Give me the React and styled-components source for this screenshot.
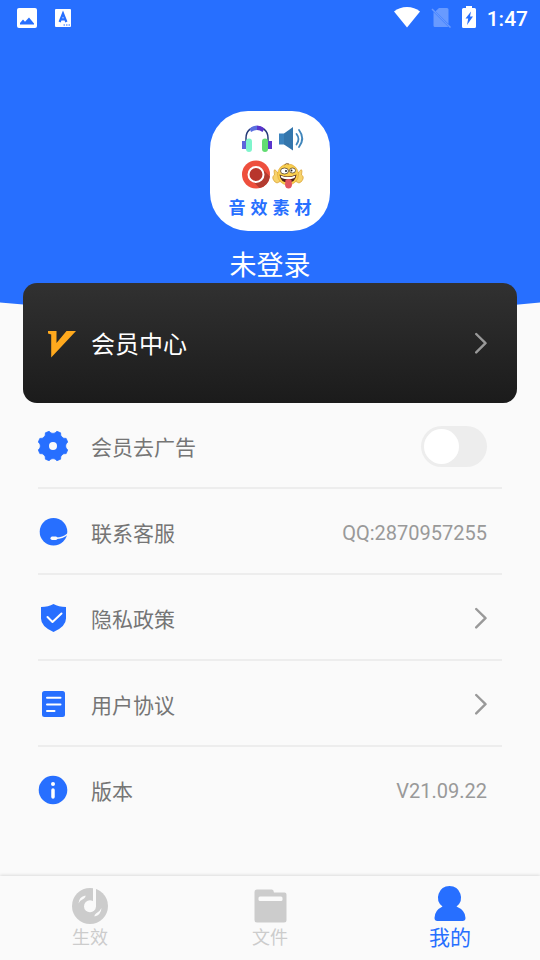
import { useState } from "react";
import styled, { createGlobalStyle } from "styled-components";

const GlobalStyle = createGlobalStyle`
  :root {
    --color-blue: #276fff;
    --color-page: #fafafa;
    --color-line: #ededed;
    --color-text: #757575;
    --color-muted: #999999;
    --color-tab: #cccccc;
    --font-latin: Roboto, "Noto Sans CJK SC", sans-serif;
  }

  * {
    box-sizing: border-box;
  }

  body {
    margin: 0;
    background-color: var(--color-page);
    font-family: "Noto Sans CJK SC", sans-serif;
  }

  button {
    border: none;
    background: none;
    padding: 0;
    font: inherit;
    cursor: pointer;
  }

  svg {
    display: block;
    flex-shrink: 0;
  }
`;

const Page = styled.div`
  min-height: 100vh;
  display: flex;
  flex-direction: column;
`;

const Header = styled.header`
  height: 315px;
  background-color: var(--color-blue);
  clip-path: ellipse(180% 100% at 50% 0);
  color: white;
`;

const StatusBar = styled.div`
  display: flex;
  justify-content: space-between;
  align-items: center;
  height: 36px;
  padding: 0 12px 0 16px;
`;

const StatusGroup = styled.div`
  display: flex;
  align-items: center;
  gap: ${props => props.$gap};
`;

const Clock = styled.time`
  padding-top: 2px;
  font-family: var(--font-latin);
  font-size: 21px;
  line-height: 24px;
  font-weight: 500;
`;

const Profile = styled.div`
  display: flex;
  flex-direction: column;
  align-items: center;
  gap: 12px;
  padding-top: 75px;
`;

const Logo = styled.div`
  display: flex;
  flex-direction: column;
  align-items: center;
  gap: 7px;
  width: 120px;
  height: 120px;
  padding-top: 13px;
  border-radius: 38px;
  background-color: white;
`;

const LogoName = styled.div`
  display: flex;
  gap: 5px;
  color: var(--color-blue);
  font-size: 17px;
  line-height: 20px;
  font-weight: 700;
`;

const UserName = styled.h1`
  margin: 0;
  font-size: 27px;
  line-height: 42px;
  font-weight: 400;
`;

const Main = styled.main`
  flex: 1;
  position: relative;
  margin-top: -32px;
`;

const MemberCard = styled.button`
  display: flex;
  align-items: center;
  width: calc(100% - 46px);
  height: 120px;
  margin: 0 23px;
  padding: 0 30px 0 23px;
  border-radius: 14px;
  background: linear-gradient(#313131, #1b1b1b);
  color: white;
  font-size: 24px;
  line-height: 36px;
  text-align: left;
`;

const CardTitle = styled.span`
  flex: 1;
  margin-left: 15px;
`;

const List = styled.ul`
  list-style: none;
  margin: 0;
  padding: 0 38px;
`;

const Item = styled.li`
  height: 86px;
  border-bottom: 2px solid var(--color-line);

  &:last-child {
    border-bottom-color: transparent;
  }
`;

const Row = styled.div`
  display: flex;
  align-items: center;
  gap: 23px;
  width: 100%;
  height: 100%;
  padding: 2px 15px 0 0;
  color: var(--color-text);
  font-size: 21px;
  line-height: 32px;
  text-align: left;
  text-decoration: none;
`;

const RowLabel = styled.span`
  flex: 1;
`;

const RowValue = styled.span`
  padding-top: 2px;
  color: var(--color-muted);
  font-family: var(--font-latin);
  font-size: 20px;
`;

const Switch = styled.input`
  appearance: none;
  display: flex;
  align-items: center;
  width: 66px;
  height: 41px;
  margin: 0;
  padding: 0 3px;
  border-radius: 21px;
  background-color: var(--color-line);
  cursor: pointer;

  &::before {
    content: "";
    width: 35px;
    height: 35px;
    border-radius: 50%;
    background-color: white;
  }

  &:checked {
    justify-content: flex-end;
    background-color: var(--color-blue);
  }
`;

const TabBar = styled.nav`
  display: flex;
  height: 84px;
  background-color: var(--color-page);
  box-shadow: 0 -1px 3px rgb(0 0 0 / 0.12);
`;

const Tab = styled.button`
  flex: 1;
  display: flex;
  flex-direction: column;
  align-items: center;
  justify-content: center;
  color: ${props => (props.$active ? "var(--color-blue)" : "var(--color-tab)")};
  font-size: ${props => (props.$active ? "21px" : "18px")};
  line-height: ${props => (props.$active ? "28px" : "24px")};
`;

function ImageIcon() {
  return (
    <svg width="22" height="20" viewBox="0 0 22 20">
      <rect x="1" y="0" width="20" height="20" rx="2" fill="white" />
      <path d="M4 16.500v-1.500l3-3.500 2 2.200 4-4.200 5 6v1z" fill="#276fff" />
    </svg>
  );
}

function KeyboardIcon() {
  return (
    <svg width="16" height="18" viewBox="0 0 16 18">
      <rect width="16" height="18" rx="1" fill="white" />
      <path
        d="M4.600 13L8 4.500 11.400 13M5.800 10.300h4.400"
        fill="none"
        stroke="#276fff"
        strokeWidth="2.200"
      />
      <path d="M8.500 16h1.500m1 0h1.500m1 0h1.500" stroke="#276fff" />
    </svg>
  );
}

function WifiIcon() {
  return (
    <svg width="26" height="22" viewBox="0 0 26 22">
      <path d="M0 4.500C3.500 1.600 8 0 13 0s9.500 1.600 13 4.500L13 20.500z" fill="white" />
    </svg>
  );
}

function NoSimIcon() {
  return (
    <svg width="20" height="20" viewBox="0 0 20 20">
      <g opacity="0.3">
        <path
          d="M8 0h8a1.500 1.500 0 0 1 1.500 1.500v14.500L4.500 3.200zM2.500 4l15 15H4a1.500 1.500 0 0 1-1.500-1.500z"
          fill="white"
        />
        <path d="M1 1l18.500 18.500" stroke="white" strokeWidth="1.500" />
      </g>
    </svg>
  );
}

function BatteryIcon() {
  return (
    <svg width="14" height="24" viewBox="0 0 14 24">
      <path
        d="M4 0h6v2h2.500A1.500 1.500 0 0 1 14 3.500v17a1.500 1.500 0 0 1-1.500 1.500h-11A1.500 1.500 0 0 1 0 20.500v-17A1.500 1.500 0 0 1 1.500 2H4z"
        fill="white"
      />
      <path d="M9 5.500L3.500 12.500h2.700L5 19l6-8.500H8z" fill="#276fff" />
    </svg>
  );
}

function LogoArt() {
  return (
    <svg width="60" height="66" viewBox="0 0 60 66" fill="none" overflow="visible">
      {/* headphones */}
      <path d="M6 17v-3C6 7 11 3 17 3s11 4 11 11v3" stroke="#253a78" strokeWidth="1.500" />
      <path d="M9.500 4.500Q13 1.500 17 1.500v4.500q-3 0-6 2z" fill="#5b6fe0" />
      <path d="M17 1.500q4 0 7.500 3l-2 3.500q-2.500-2-5.500-2z" fill="#5a35cc" />
      <path d="M2 17h5v8H2z" fill="#5e66dc" />
      <path d="M27 17h5v8h-5z" fill="#5b35cc" />
      <rect x="6" y="14.500" width="6" height="13.500" rx="3" fill="#7ff5cc" />
      <rect x="22" y="14.500" width="6" height="13.500" rx="3" fill="#62dc72" />

      {/* speaker */}
      <path d="M39 9.500h5.500v11H39z" fill="#3c83bd" />
      <path d="M44 9.500l9-6.500v23.500l-9-6z" fill="#3476ac" />
      <path
        d="M56.500 10q4 5 0 10.500M59 6q6.500 8.500 0 17"
        stroke="#4186bb"
        strokeWidth="1.800"
        strokeLinecap="round"
      />

      {/* record */}
      <circle cx="16" cy="50.500" r="14" fill="#ee4f3d" />
      <path d="M22 44.500l7.900 7.900A14 14 0 0 1 19.500 64.100l-9-9z" fill="#b33b30" />
      <circle cx="16" cy="50.500" r="7.500" fill="#b8352c" stroke="white" strokeWidth="2" />

      {/* emoji */}
      <path
        d="M36.500 47.500q-1.500-3-2.500-1l.5 4.500q-2.500 1-1.500 4t4 4l4-2-1-6zM59.500 47.500q1.500-3 2.500-1l-.5 4.500q2.500 1 1.500 4t-4 4l-4-2 1-6z"
        fill="#f7d36b"
        stroke="#dba33a"
        strokeWidth="0.800"
      />
      <circle cx="48" cy="50.500" r="10.500" fill="#f9cf4f" stroke="#dda12c" strokeWidth="0.600" />
      <path d="M44.500 41q1.500-2.500 4.500-1" stroke="#7b5224" strokeWidth="0.800" />
      <ellipse cx="44.500" cy="47" rx="4" ry="3" fill="white" stroke="#5a4426" strokeWidth="0.800" />
      <ellipse cx="52.500" cy="46.500" rx="3" ry="2.500" fill="white" stroke="#5a4426" strokeWidth="0.800" />
      <circle cx="46" cy="47" r="1" fill="#222222" />
      <circle cx="51.500" cy="46.500" r="1" fill="#222222" />
      <path d="M39.500 50.500q8 4 17 0-1 8-8.500 8t-8.500-8z" fill="#4a1d14" />
      <path d="M40.500 51.500q7.500 3 15 0l-1 2.500q-6.500 2.500-13 0z" fill="white" />
      <path d="M45.500 56q3-2 6 0l.5 5q-.5 3.500-3.500 3.500t-3.500-3.500z" fill="#e25560" />
    </svg>
  );
}

function VipIcon() {
  return (
    <svg width="30" height="30" viewBox="0 0 30 30">
      <path d="M2 3h8.500v12L20.500 3H30L5.200 29.500V6.500L2 5.500z" fill="#ffa91d" />
    </svg>
  );
}

function Chevron() {
  return (
    <svg width="13" height="22" viewBox="0 0 13 22" fill="none">
      <path
        d="M2.200 2l9.300 9.200-9.300 9.200"
        stroke="#999999"
        strokeWidth="2.400"
        strokeLinecap="round"
        strokeLinejoin="round"
      />
    </svg>
  );
}

// point on a circle round the gear's centre, angle measured from the top
function polar(angle, radius) {
  const rad = (angle * Math.PI) / 180;
  const x = 15 + radius * Math.sin(rad);
  const y = 15 - radius * Math.cos(rad);
  return `${x.toFixed(2)} ${y.toFixed(2)}`;
}

const gearTeeth = [0, 45, 90, 135, 180, 225, 270, 315]
  .map(
    angle =>
      `${angle === 0 ? "M" : "L"}${polar(angle + 15, 15.2)} L${polar(
        angle + 30,
        15.2
      )} L${polar(angle + 36, 13.2)} Q${polar(angle + 45, 12.2)} ${polar(
        angle + 54,
        13.2
      )}`
  )
  .join(" ");

function GearIcon() {
  return (
    <svg width="30" height="30" viewBox="0 0 30 30" overflow="visible">
      <path
        d={`${gearTeeth}z`}
        fill="#276fff"
        stroke="#276fff"
        strokeWidth="0.800"
        strokeLinejoin="round"
      />
      <circle cx="15" cy="15" r="4" fill="#fafafa" />
    </svg>
  );
}

function ServiceIcon() {
  return (
    <svg width="30" height="30" viewBox="0 0 30 30" fill="none">
      <circle cx="15.500" cy="14.800" r="13.800" fill="#276fff" />
      <path d="M17 21.300q7.500.3 13-4.500" stroke="#fafafa" strokeWidth="1.500" />
      <rect x="12.500" y="19.500" width="7" height="3.500" rx="1.700" fill="#fafafa" />
    </svg>
  );
}

function ShieldIcon() {
  return (
    <svg width="30" height="30" viewBox="0 0 30 30" fill="none">
      <path
        d="M15.500 1q5 3 12.500 3v11.500q0 8-12.500 13.500Q3 23.500 3 15.500V4q7.500 0 12.500-3z"
        fill="#276fff"
      />
      <path
        d="M9.500 14l5 5 9-8.500"
        stroke="white"
        strokeWidth="2"
        strokeLinecap="round"
        strokeLinejoin="round"
      />
    </svg>
  );
}

function DocumentIcon() {
  return (
    <svg width="30" height="30" viewBox="0 0 30 30" fill="none">
      <rect x="4" y="2" width="23" height="26" rx="2.500" fill="#276fff" />
      <path
        d="M9 8.700h13.500M9 15.500h13.500M9 22h7.500"
        stroke="white"
        strokeWidth="2"
        strokeLinecap="round"
      />
    </svg>
  );
}

function InfoIcon() {
  return (
    <svg width="30" height="30" viewBox="0 0 30 30" fill="none">
      <circle cx="15" cy="15" r="14.300" fill="#276fff" />
      <circle cx="15" cy="9" r="2" fill="white" />
      <path d="M15 15v7" stroke="white" strokeWidth="3.500" strokeLinecap="round" />
    </svg>
  );
}

function DiscIcon() {
  return (
    <svg width="36" height="36" viewBox="0 0 36 36" fill="none">
      <circle cx="18" cy="18" r="18" fill="#cccccc" />
      <circle cx="18" cy="18.300" r="6" fill="#fafafa" />
      <path d="M21 0h3v18h-3z" fill="#fafafa" />
      <path
        d="M6.500 15.500Q7 8.500 13.500 7.500 14 9 12 10.500 8.500 12 6.500 15.500zM29.500 20Q29 27 22.500 28.500 22 27 24 25.500 27.500 24 29.500 20z"
        fill="#fafafa"
      />
    </svg>
  );
}

function FolderIcon() {
  return (
    <svg width="36" height="36" viewBox="0 0 36 36">
      <path
        d="M5 1.500h15q1.500 0 2 3h10.500q2 0 2 2v25.500q0 2.500-2.500 2.500H5q-2.500 0-2.500-2.500V4q0-2.500 2.500-2.500z"
        fill="#cccccc"
      />
      <rect x="6.500" y="8.500" width="24" height="4.500" rx="1.500" fill="#fafafa" />
    </svg>
  );
}

function PersonIcon() {
  return (
    <svg width="36" height="36" viewBox="0 0 36 36">
      <path
        d="M17.500 0a11.500 11.500 0 0 1 7 20.600Q33.500 24.500 33.500 32q0 3-3 3h-25q-3 0-3-3 0-7.500 8-11.400A11.500 11.500 0 0 1 17.500 0z"
        fill="#276fff"
      />
    </svg>
  );
}

const tabs = [
  { id: "effect", label: "生效", Icon: DiscIcon },
  { id: "files", label: "文件", Icon: FolderIcon },
  { id: "mine", label: "我的", Icon: PersonIcon },
];

const logoName = ["音", "效", "素", "材"];

function App() {
  const [hideAds, setHideAds] = useState(false);
  const [activeTab, setActiveTab] = useState("mine");

  const renderedTabs = tabs.map(({ id, label, Icon }) => (
    <Tab key={id} $active={id === activeTab} onClick={() => setActiveTab(id)}>
      <Icon />
      <span>{label}</span>
    </Tab>
  ));

  return (
    <>
      <GlobalStyle />
      <Page>
        <Header>
          <StatusBar>
            <StatusGroup $gap="17px">
              <ImageIcon />
              <KeyboardIcon />
            </StatusGroup>
            <StatusGroup $gap="11px">
              <WifiIcon />
              <NoSimIcon />
              <BatteryIcon />
              <Clock>1:47</Clock>
            </StatusGroup>
          </StatusBar>
          <Profile>
            <Logo>
              <LogoArt />
              <LogoName>
                {logoName.map(char => (
                  <span key={char}>{char}</span>
                ))}
              </LogoName>
            </Logo>
            <UserName>未登录</UserName>
          </Profile>
        </Header>

        <Main>
          <MemberCard>
            <VipIcon />
            <CardTitle>会员中心</CardTitle>
            <Chevron />
          </MemberCard>

          <List>
            <Item>
              <Row as="label" htmlFor="hide-ads">
                <GearIcon />
                <RowLabel>会员去广告</RowLabel>
                <Switch
                  id="hide-ads"
                  type="checkbox"
                  checked={hideAds}
                  onChange={e => setHideAds(e.target.checked)}
                />
              </Row>
            </Item>
            <Item>
              <Row as="button">
                <ServiceIcon />
                <RowLabel>联系客服</RowLabel>
                <RowValue>QQ:2870957255</RowValue>
              </Row>
            </Item>
            <Item>
              <Row as="a" href="#privacy">
                <ShieldIcon />
                <RowLabel>隐私政策</RowLabel>
                <Chevron />
              </Row>
            </Item>
            <Item>
              <Row as="a" href="#agreement">
                <DocumentIcon />
                <RowLabel>用户协议</RowLabel>
                <Chevron />
              </Row>
            </Item>
            <Item>
              <Row>
                <InfoIcon />
                <RowLabel>版本</RowLabel>
                <RowValue>V21.09.22</RowValue>
              </Row>
            </Item>
          </List>
        </Main>

        <TabBar>{renderedTabs}</TabBar>
      </Page>
    </>
  );
}

export default App;
